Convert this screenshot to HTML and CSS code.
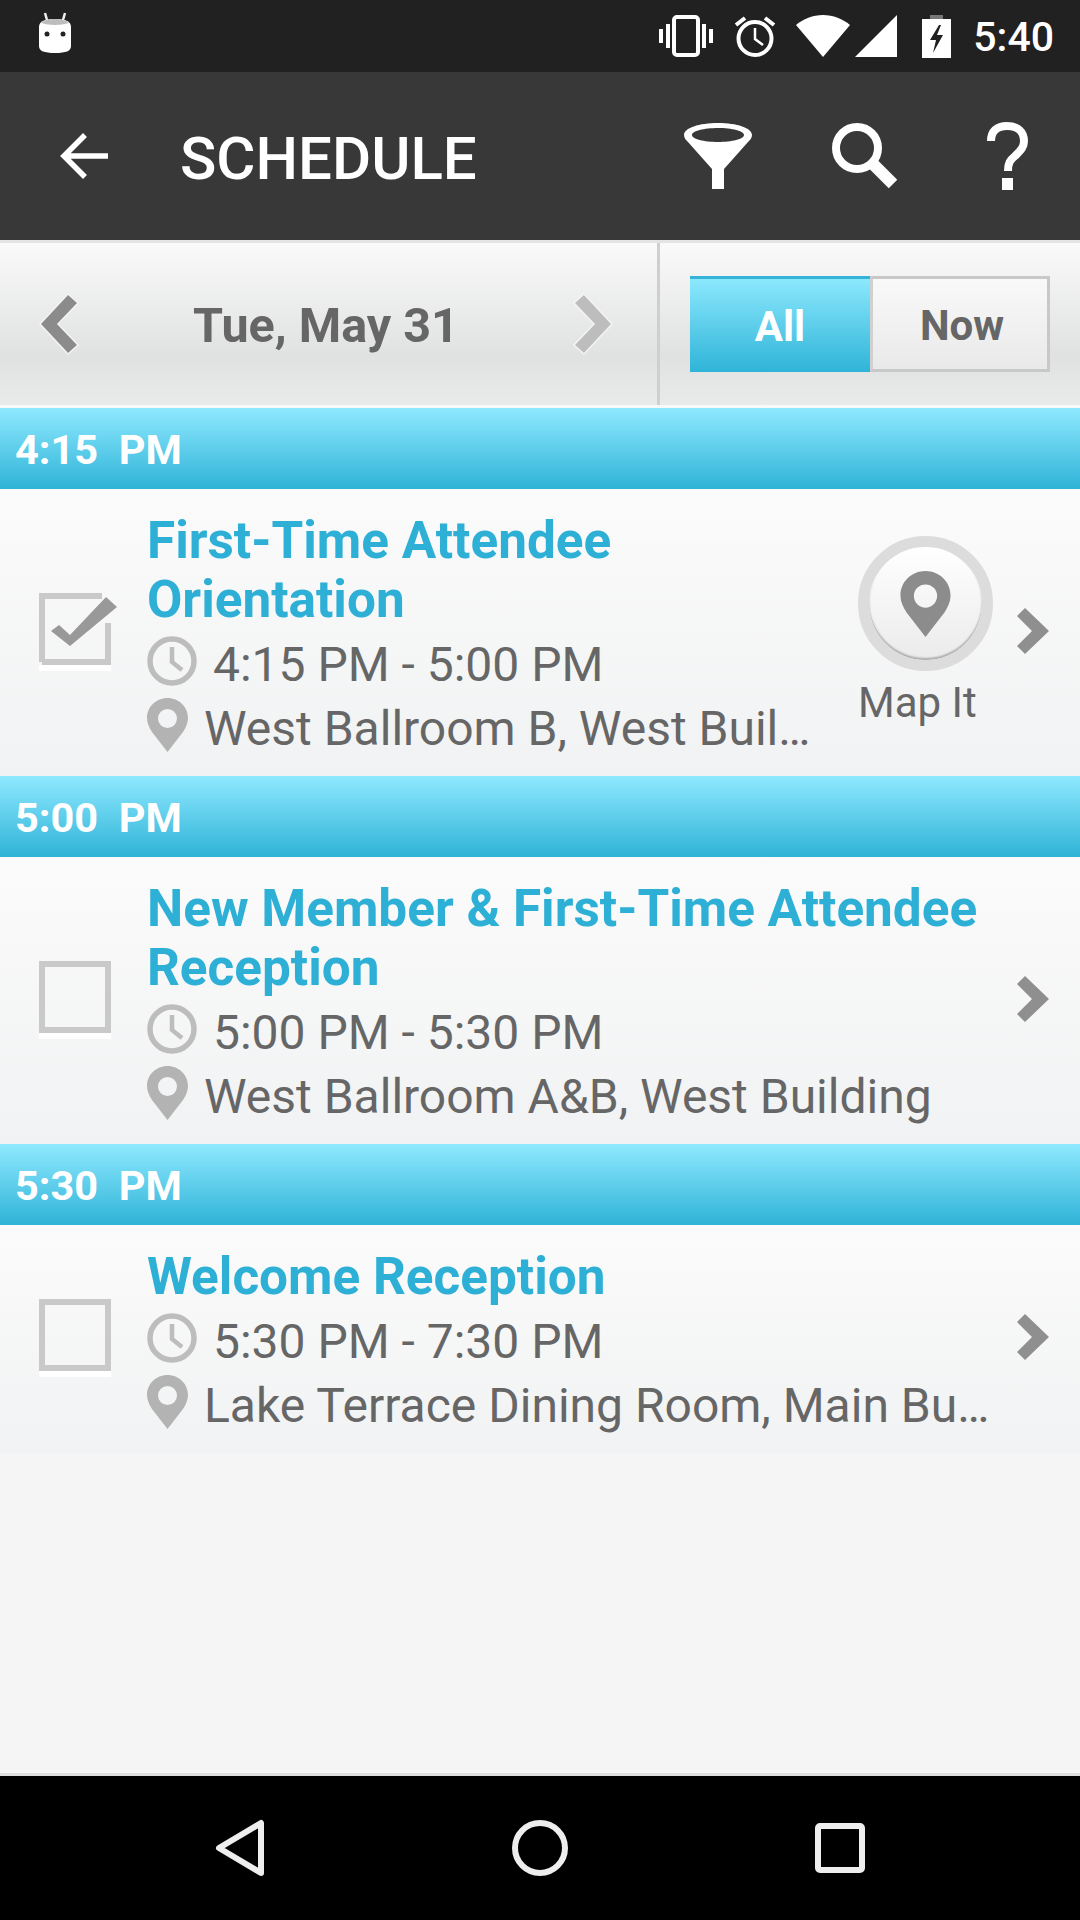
FILE: index.html
```html
<!DOCTYPE html>
<html lang="en">
<head>
    <meta charset="UTF-8">
    <title>Schedule</title>
    <link rel="stylesheet" href="styles.css">
</head>
<body>
    <svg class="defs" width="0" height="0">
        <symbol id="clock" viewBox="0 0 50 50">
            <circle cx="25" cy="25" r="22" fill="none" stroke="#bdbdbd" stroke-width="5.5"/>
            <path d="M25 11v15l10 8" fill="none" stroke="#bdbdbd" stroke-width="4.5"/>
        </symbol>
        <symbol id="pin" viewBox="0 0 41 54">
            <path fill-rule="evenodd" fill="#b3b3b3" d="M20.500 0C9 0 0 9 0 20c0 5 2 9 5 14l15.500 20L36 34c3-5 5-9 5-14C41 9 32 0 20.500 0zm0 11a9.500 9.500 0 1 1 0 19 9.500 9.500 0 0 1 0-19z"/>
        </symbol>
        <symbol id="chev" viewBox="0 0 32 46">
            <path fill="#8f8f8f" d="M0 8 8 0l24 23L8 46l-8-8 15-15z"/>
        </symbol>
        <symbol id="box" viewBox="0 0 78 78">
            <rect y="72" width="72" height="6" fill="#fff"/>
            <rect x="3" y="3" width="66" height="66" fill="none" stroke="#c9c9c9" stroke-width="6"/>
        </symbol>
    </svg>

    <!-- status bar -->
    <div class="status">
        <svg class="ic-droid" width="36" height="42" viewBox="0 0 36 42">
            <path d="M8 1l2 7M28 1l-2 7" stroke="#eee" stroke-width="2.500"/>
            <path fill="#fff" d="M2 15c0-6 6-8 16-8s16 2 16 8v19c0 5-5 7-16 7S2 39 2 34z"/>
            <path fill="#bdbdbd" d="M4 11c3-3 8-4 14-4s11 1 14 4c-4 1-9 2-14 2S8 12 4 11z"/>
            <circle cx="10" cy="22" r="2.500" fill="#222"/>
            <circle cx="26" cy="22" r="2.500" fill="#222"/>
        </svg>
        <div class="status-icons">
            <svg width="54" height="42" viewBox="0 0 54 42">
                <rect x="15" y="2" width="24" height="38" rx="3" fill="none" stroke="#fff" stroke-width="4"/>
                <path fill="#fff" d="M0 14h4v14H0zM7 9h4v24H7zM43 9h4v24h-4zM50 14h4v14h-4z"/>
            </svg>
            <svg class="ic-alarm" width="42" height="42" viewBox="0 0 42 42">
                <circle cx="21" cy="23.500" r="16.500" fill="none" stroke="#fff" stroke-width="4"/>
                <path d="M21 13v11l8 6" fill="none" stroke="#fff" stroke-width="2.500"/>
                <path d="M2 10 11 3M40 10l-9-7" stroke="#fff" stroke-width="4"/>
            </svg>
            <svg class="ic-wifi" width="54" height="42" viewBox="0 0 54 42">
                <path fill="#fff" d="M27 42 0 10C7 4 17 0 27 0s20 4 27 10z"/>
            </svg>
            <svg class="ic-signal" width="42" height="42" viewBox="0 0 42 42">
                <path fill="#fff" d="M42 0v42H0z"/>
            </svg>
            <svg class="ic-batt" width="29" height="43" viewBox="0 0 29 43">
                <path fill="#777" d="M8 0h13v4H8z"/>
                <path fill="#fff" d="M0 4h29v39H0z"/>
                <path fill="#212121" d="M17 10 8 25h6l-3 13 10-18h-6l4-10z"/>
            </svg>
            <span class="clock-text">5:40</span>
        </div>
    </div>

    <!-- action bar -->
    <div class="toolbar">
        <svg class="ic-back" width="48" height="48" viewBox="0 0 48 48">
            <path d="M48 24H5M25 3 4 24l21 21" fill="none" stroke="#fff" stroke-width="5.500"/>
        </svg>
        <span class="toolbar-title">SCHEDULE</span>
        <svg class="ic-funnel" width="68" height="66" viewBox="0 0 68 66">
            <path fill="#fff" fill-rule="evenodd" d="M34 0c19 0 34 5 34 12 0 3-2 5-4 7L40 46v20H28V46L4 19c-2-2-4-4-4-7C0 5 15 0 34 0zm0 5C20 5 8 8 8 12s12 7 26 7 26-3 26-7-12-7-26-7z"/>
        </svg>
        <svg class="ic-search" width="66" height="66" viewBox="0 0 66 66">
            <circle cx="25" cy="25" r="21" fill="none" stroke="#fff" stroke-width="8"/>
            <path d="M38 38l23 23" stroke="#fff" stroke-width="12"/>
        </svg>
        <svg class="ic-help" width="41" height="68" viewBox="0 0 41 68">
            <path d="M4 19C4 9 10 4 20 4c11 0 17 6 17 15 0 7-4 10-9 15-5 4-7 7-7 15" fill="none" stroke="#fff" stroke-width="8"/>
            <path fill="#fff" d="M15 56h11v12H15z"/>
        </svg>
    </div>

    <!-- date picker -->
    <div class="datebar">
        <div class="date-nav">
            <svg width="42" height="62" viewBox="0 0 42 62">
                <path fill="#8b8b8b" stroke="#f4f4f4" stroke-width="1.500" d="M30 1 40 10 20 31l20 21-10 9L2 31z"/>
            </svg>
            <span class="date-text">Tue, May 31</span>
            <svg width="42" height="62" viewBox="0 0 42 62">
                <path fill="#bdbdbd" stroke="#f4f4f4" stroke-width="1.500" d="M12 1 2 10l20 21L2 52l10 9 28-30z"/>
            </svg>
        </div>
        <div class="date-filter">
            <span class="filter-btn filter-on">All</span>
            <span class="filter-btn filter-now">Now</span>
        </div>
    </div>

    <div class="list">
        <div class="time-head">4:15&nbsp; PM</div>
        <div class="item">
            <div class="check">
                <svg class="check-box" width="78" height="78" viewBox="0 0 78 78">
                    <path d="M66 36h6v36h-6z" fill="#c9c9c9"/>
                    <rect y="72" width="72" height="6" fill="#fff"/>
                    <path d="M3 69V3h60M3 69h66V30" fill="none" stroke="#c9c9c9" stroke-width="6"/>
                    <path fill="#999" d="M20 32l11 10L67 4l11 10-47 39-19-15z"/>
                </svg>
            </div>
            <div class="info">
                <div class="title">First-Time Attendee<br>Orientation</div>
                <div class="meta"><svg class="meta-clock"><use href="#clock"/></svg><span>4:15 PM - 5:00 PM</span></div>
                <div class="meta"><svg class="meta-pin"><use href="#pin"/></svg><span>West Ballroom B, West Buil…</span></div>
            </div>
            <div class="map-it">
                <div class="map-btn">
                    <svg width="51" height="66" viewBox="0 0 41 54">
                        <path fill-rule="evenodd" fill="#8c8c8c" d="M20.500 0C9 0 0 9 0 20c0 5 2 9 5 14l15.500 20L36 34c3-5 5-9 5-14C41 9 32 0 20.500 0zm0 11a9.500 9.500 0 1 1 0 19 9.500 9.500 0 0 1 0-19z"/>
                    </svg>
                </div>
                <div class="map-label">Map It</div>
            </div>
            <svg class="chev"><use href="#chev"/></svg>
        </div>

        <div class="time-head">5:00&nbsp; PM</div>
        <div class="item">
            <div class="check"><svg class="check-box"><use href="#box"/></svg></div>
            <div class="info">
                <div class="title">New Member &amp; First-Time Attendee<br>Reception</div>
                <div class="meta"><svg class="meta-clock"><use href="#clock"/></svg><span>5:00 PM - 5:30 PM</span></div>
                <div class="meta"><svg class="meta-pin"><use href="#pin"/></svg><span>West Ballroom A&amp;B, West Building</span></div>
            </div>
            <svg class="chev"><use href="#chev"/></svg>
        </div>

        <div class="time-head">5:30&nbsp; PM</div>
        <div class="item">
            <div class="check"><svg class="check-box"><use href="#box"/></svg></div>
            <div class="info">
                <div class="title">Welcome Reception</div>
                <div class="meta"><svg class="meta-clock"><use href="#clock"/></svg><span>5:30 PM - 7:30 PM</span></div>
                <div class="meta"><svg class="meta-pin"><use href="#pin"/></svg><span>Lake Terrace Dining Room, Main Bu…</span></div>
            </div>
            <svg class="chev"><use href="#chev"/></svg>
        </div>
    </div>

    <!-- nav buttons -->
    <div class="navbar">
        <svg width="50" height="58" viewBox="0 0 50 58">
            <path d="M46 4v50L4 29z" fill="none" stroke="#eee" stroke-width="6" stroke-linejoin="round"/>
        </svg>
        <svg width="56" height="56" viewBox="0 0 56 56">
            <circle cx="28" cy="28" r="25" fill="none" stroke="#eee" stroke-width="6"/>
        </svg>
        <svg width="50" height="50" viewBox="0 0 50 50">
            <rect x="3" y="3" width="44" height="44" rx="2" fill="none" stroke="#eee" stroke-width="6"/>
        </svg>
    </div>
</body>
</html>
```
FILE: styles.css
```css
html, body {
    margin: 0;
    padding: 0;
    height: 100%;
}

body {
    display: flex;
    flex-direction: column;
    width: 1080px;
    height: 1920px;
    overflow: hidden;
    background-color: #f5f5f5;
    font-family: Roboto, "Liberation Sans", sans-serif;
}

svg {
    display: block;
    flex: none;
}

.defs {
    position: absolute;
}

/* status bar */
.status {
    display: flex;
    align-items: center;
    justify-content: space-between;
    height: 72px;
    background-color: #212121;
    box-sizing: border-box;
    padding: 0 26px 0 37px;
}

.ic-droid {
    margin-top: -6px;
}

.status-icons {
    display: flex;
    align-items: center;
}

.ic-alarm { margin-left: 21px; }
.ic-wifi { margin-left: 20px; }
.ic-signal { margin-left: 5px; }
.ic-batt { margin-left: 25px; }

.clock-text {
    margin-left: 22px;
    padding-top: 2px;
    font-size: 41px;
    font-weight: 500;
    color: #fff;
}

/* action bar */
.toolbar {
    display: flex;
    align-items: center;
    height: 168px;
    background-color: #383838;
}

.ic-back { margin-left: 60px; }

.toolbar-title {
    margin-left: 72px;
    padding-top: 4px;
    width: 504px;
    font-size: 60px;
    font-weight: 500;
    color: #fff;
}

.ic-search { margin-left: 80px; }
.ic-help { margin-left: 89px; }

/* date picker */
.datebar {
    display: flex;
    height: 168px;
    box-sizing: border-box;
    border-top: 3px solid #e4e4e4;
    border-bottom: 3px solid #f8f8f8;
    background: linear-gradient(#fafafa, #e0e1e1 70%, #e9eaea);
}

.date-nav {
    display: flex;
    align-items: center;
    justify-content: space-between;
    width: 660px;
    box-sizing: border-box;
    padding: 0 43px 0 38px;
    border-right: 3px solid #cfcfcf;
}

.date-text {
    padding-top: 2px;
    font-size: 48.5px;
    font-weight: 700;
    color: #666;
}

.date-filter {
    display: flex;
    align-items: center;
    padding-left: 30px;
}

.filter-btn {
    display: flex;
    align-items: center;
    justify-content: center;
    width: 180px;
    height: 96px;
    box-sizing: border-box;
    padding-top: 2px;
    border: 3px solid #c8c8c8;
    border-left: none;
    background: linear-gradient(#f9f9f9, #e9e9e9);
    font-size: 42px;
    font-weight: 700;
    color: #666;
}

.filter-now {
    padding-left: 4px;
    border-left: 3px solid #d0d0d0;
}

.filter-on {
    border: none;
    border-top: 3px solid #35b3d8;
    background: linear-gradient(#8ce8fd, #2fb4d8);
    color: #fff;
}

/* schedule list */
.list {
    flex: 1;
}

.time-head {
    height: 81px;
    box-sizing: border-box;
    padding-left: 15px;
    background: linear-gradient(#8fe9ff, #2fb3d7);
    font-size: 41.5px;
    font-weight: 700;
    line-height: 84px;
    color: #fff;
}

.item {
    display: flex;
    align-items: center;
    box-sizing: border-box;
    padding: 22px 31px 19px 0;
    background: linear-gradient(#fbfbfb, #f1f2f3);
}

.check {
    width: 147px;
    flex: none;
    box-sizing: border-box;
    padding-left: 39px;
    margin-bottom: 5px;
}

.check-box {
    width: 78px;
    height: 78px;
}

.info {
    flex: 1;
    min-width: 0;
}

.title {
    font-size: 51.3px;
    font-weight: 700;
    line-height: 59px;
    color: #2eb0d6;
}

.meta {
    display: flex;
    align-items: center;
    height: 64px;
    font-size: 48px;
    color: #666;
    white-space: nowrap;
}

.meta span {
    padding-top: 7px;
}

.meta-clock {
    width: 50px;
    height: 50px;
    margin-right: 16px;
}

.meta-pin {
    width: 41px;
    height: 54px;
    margin-right: 16px;
}

.map-it {
    width: 135px;
    flex: none;
    margin-right: 24px;
}

.map-btn {
    display: flex;
    align-items: center;
    justify-content: center;
    width: 135px;
    height: 135px;
    box-sizing: border-box;
    border: 11px solid #dcdcdc;
    border-radius: 50%;
    background: linear-gradient(#fff, #ebebeb);
    box-shadow: inset 0 -2px 2px #aaa;
}

.map-label {
    padding-top: 2px;
    font-size: 42px;
    line-height: 59px;
    white-space: nowrap;
    color: #666;
}

.chev {
    width: 32px;
    height: 46px;
    margin-bottom: 7px;
}

/* nav buttons */
.navbar {
    display: flex;
    align-items: center;
    height: 147px;
    box-sizing: border-box;
    border-top: 3px solid #dedede;
    background-color: #000;
    padding-left: 215px;
    gap: 247px;
}
```
